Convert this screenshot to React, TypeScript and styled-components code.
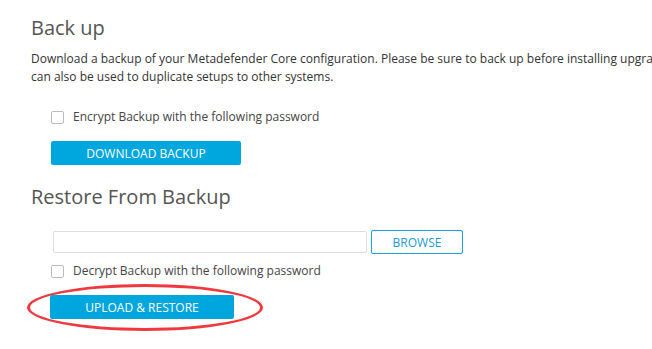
import React from "react";
import styled, { createGlobalStyle } from "styled-components";

const GlobalStyle = createGlobalStyle`
  html, body {
    margin: 0;
    padding: 0;
    background: #fff;
    overflow: hidden;
  }
  body {
    font-family: "Open Sans", "Noto Sans", sans-serif;
    color: #333;
  }
`;

const Page = styled.div`
  width: 760px;
  padding: 12px 0 0 31px;
`;

const Title = styled.h2<{ $top?: number }>`
  margin: ${(p) => p.$top ?? 0}px 0 0;
  font-size: 20px;
  font-weight: 400;
  line-height: 32px;
  color: #555;
`;

const Text = styled.p`
  margin: 6px 0 0;
  font-size: 12px;
  line-height: 18px;
  color: #333;
  white-space: nowrap;
`;

const Block = styled.div<{ $top: number }>`
  margin-top: ${(p) => p.$top}px;
  padding-left: 20px;
  display: flex;
  flex-direction: column;
  align-items: flex-start;
`;

const CheckRow = styled.label<{ $top?: number }>`
  display: flex;
  align-items: center;
  gap: 9px;
  margin-top: ${(p) => p.$top ?? 0}px;
  font-size: 12px;
  line-height: 18px;
  color: #444;
`;

const Box = styled.span`
  width: 11px;
  height: 11px;
  border: 1px solid #bbb;
  border-radius: 2px;
  background: #fff;
`;

const Primary = styled.button<{ $width: number; $top?: number }>`
  display: block;
  width: ${(p) => p.$width}px;
  height: 24px;
  margin-top: ${(p) => p.$top ?? 0}px;
  border: 0;
  border-radius: 2px;
  background: #00a6de;
  color: #fff;
  font-family: inherit;
  font-size: 12px;
  text-transform: uppercase;
  padding: 0;
`;

const FileRow = styled.div`
  display: flex;
  gap: 4px;
  margin-left: 2px;
`;

const FileInput = styled.div`
  width: 312px;
  height: 20px;
  border: 1px solid #ddd;
  border-radius: 2px;
`;

const Browse = styled.button`
  width: 92px;
  height: 24px;
  margin-top: -1px;
  border: 1px solid #16a2d8;
  border-radius: 2px;
  background: #fff;
  color: #1b9ad2;
  font-family: inherit;
  font-size: 12px;
  padding: 0;
`;

/* red annotation ring drawn around the upload button */
const Ring = styled.div`
  margin: 4px 0 0 -24px;
  padding: 8px 26px 9px 20px;
  border: 3px solid #f0393f;
  border-radius: 50%;
`;

export default function App() {
  return (
    <>
      <GlobalStyle />
      <Page>
        <Title>Back up</Title>
        <Text>
          Download a backup of your Metadefender Core configuration. Please be sure to back up before installing upgrades. It
          <br />
          can also be used to duplicate setups to other systems.
        </Text>
        <Block $top={22}>
          <CheckRow>
            <Box />
            Encrypt Backup with the following password
          </CheckRow>
          <Primary $width={190} $top={15}>Download Backup</Primary>
        </Block>
        <Title $top={16}>Restore From Backup</Title>
        <Block $top={18}>
          <FileRow>
            <FileInput />
            <Browse>BROWSE</Browse>
          </FileRow>
          <CheckRow $top={8}>
            <Box />
            Decrypt Backup with the following password
          </CheckRow>
          <Ring>
            <Primary $width={184}>Upload &amp; Restore</Primary>
          </Ring>
        </Block>
      </Page>
    </>
  );
}
